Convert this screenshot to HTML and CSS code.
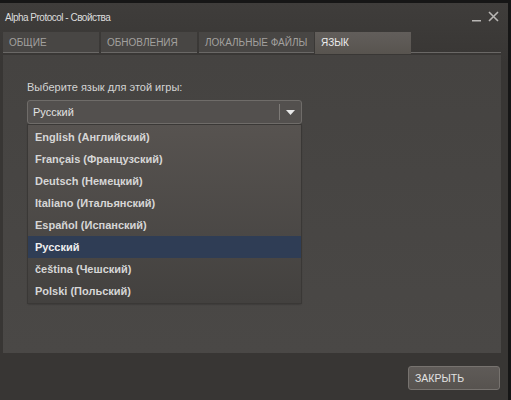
FILE: index.html
```html
<!DOCTYPE html>
<html>
<head>
<meta charset="utf-8">
<link rel="stylesheet" href="styles.css">
</head>
<body>
<div class="window">
  <div class="titlebar">
    <span class="title">Alpha Protocol - Свойства</span>
    <div class="controls">
      <svg class="min" width="9" height="12" viewBox="0 0 9 12"><rect x="0" y="10" width="9" height="1.5" fill="#b8b6b4"/></svg>
      <svg class="close" width="11" height="11" viewBox="0 0 11 11"><path d="M1 1 L10 10 M10 1 L1 10" stroke="#b8b6b4" stroke-width="1.6"/></svg>
    </div>
  </div>
  <div class="tabs">
    <div class="tab t1">ОБЩИЕ</div>
    <div class="tab t2">ОБНОВЛЕНИЯ</div>
    <div class="tab t3">ЛОКАЛЬНЫЕ ФАЙЛЫ</div>
    <div class="tab active">ЯЗЫК</div>
    <div class="tabfill"></div>
  </div>
  <div class="panel">
    <div class="label">Выберите язык для этой игры:</div>
    <div class="selectwrap">
      <div class="select">
        <span class="value">Русский</span>
        <span class="divider"></span>
        <svg class="arrow" width="9" height="5" viewBox="0 0 9 5"><path d="M0 0 H9 L4.5 5 Z" fill="#e8e8e8"/></svg>
      </div>
      <ul class="dropdown">
        <li>English (Английский)</li>
        <li>Français (Французский)</li>
        <li>Deutsch (Немецкий)</li>
        <li>Italiano (Итальянский)</li>
        <li>Español (Испанский)</li>
        <li class="sel">Русский</li>
        <li>čeština (Чешский)</li>
        <li>Polski (Польский)</li>
      </ul>
    </div>
  </div>
  <div class="footer">
    <button class="btn">ЗАКРЫТЬ</button>
  </div>
</div>
</body>
</html>
```
FILE: styles.css
```css
html, body {
  margin: 0;
  padding: 0;
  background: #161616;
}
body {
  width: 511px;
  height: 400px;
  overflow: hidden;
  font-family: "Liberation Sans", Arial, sans-serif;
}
.window {
  margin-top: 3px;
  width: 508px;
  height: 397px;
  background: linear-gradient(#3f3d3b, #383634 60px, #383634);
  display: flex;
  flex-direction: column;
}
.titlebar {
  height: 29px;
  display: flex;
  align-items: center;
  justify-content: space-between;
  padding: 0 9px 0 5px;
}
.title {
  color: #dcdcdc;
  font-size: 10px;
  letter-spacing: -0.5px;
  margin-top: -1px;
}
.controls {
  display: flex;
  align-items: center;
  gap: 7px;
  margin-top: -3px;
}
.tabs {
  display: flex;
  height: 22px;
  padding-left: 3px;
}
.tab {
  height: 21px;
  background: #484644;
  color: #a3a19f;
  font-size: 10px;
  line-height: 21px;
  padding-left: 6px;
  box-sizing: border-box;
  border-bottom: 1px solid #6a6866;
  white-space: nowrap;
}
.t1 { width: 96px; margin-right: 2px; }
.t2 { width: 96px; margin-right: 2px; }
.t3 { width: 115px; margin-right: 1px; }
.tab.active {
  width: 96px;
  height: 22px;
  background: linear-gradient(#625e5b, #58544f);
  color: #ececec;
  border-bottom: none;
}
.tabfill {
  width: 90px;
  height: 21px;
  border-bottom: 1px solid #6a6866;
  box-sizing: border-box;
}
.panel {
  margin: 1px 0 0 3px;
  width: 498px;
  height: 298px;
  background: linear-gradient(#454341, #4a4846);
  padding: 26px 0 0 24px;
  box-sizing: border-box;
}
.label {
  color: #d4d4d4;
  font-size: 11px;
  line-height: 13px;
}
.selectwrap {
  position: relative;
  margin-top: 6px;
  width: 275px;
}
.select {
  height: 24px;
  box-sizing: border-box;
  border: 1px solid #6f6c69;
  border-radius: 3px;
  background: #53504e;
  display: flex;
  align-items: center;
  padding-left: 5px;
}
.value {
  color: #e2e2e2;
  font-size: 11px;
  flex: 1;
}
.divider {
  width: 1px;
  height: 16px;
  background: #7d7a77;
  margin-right: 6px;
}
.arrow {
  margin-right: 6px;
  margin-top: 1px;
}
.dropdown {
  position: absolute;
  left: 1px;
  top: 25px;
  width: 273px;
  margin: 0;
  padding: 1px 0 1px 0;
  list-style: none;
  background: linear-gradient(#575350, #43413f);
  box-shadow: 0 0 0 1px #3a3836, 0 1px 2px rgba(0,0,0,0.4);
}
.dropdown li {
  height: 22px;
  line-height: 22px;
  padding-left: 7px;
  color: #d6d6d6;
  font-size: 11px;
  font-weight: bold;
}
.dropdown li.sel {
  background: #2f3d55;
  color: #eeeeee;
}
.footer {
  display: flex;
  justify-content: flex-end;
  padding: 13px 8px 0 0;
}
.btn {
  width: 92px;
  height: 24px;
  box-sizing: border-box;
  border: 1px solid #77736f;
  border-radius: 3px;
  background: linear-gradient(#5f5b58, #57534f);
  color: #e2e2e2;
  font-family: "Liberation Sans", Arial, sans-serif;
  font-size: 10.5px;
  text-align: left;
  padding: 0 0 0 6px;
}
```
